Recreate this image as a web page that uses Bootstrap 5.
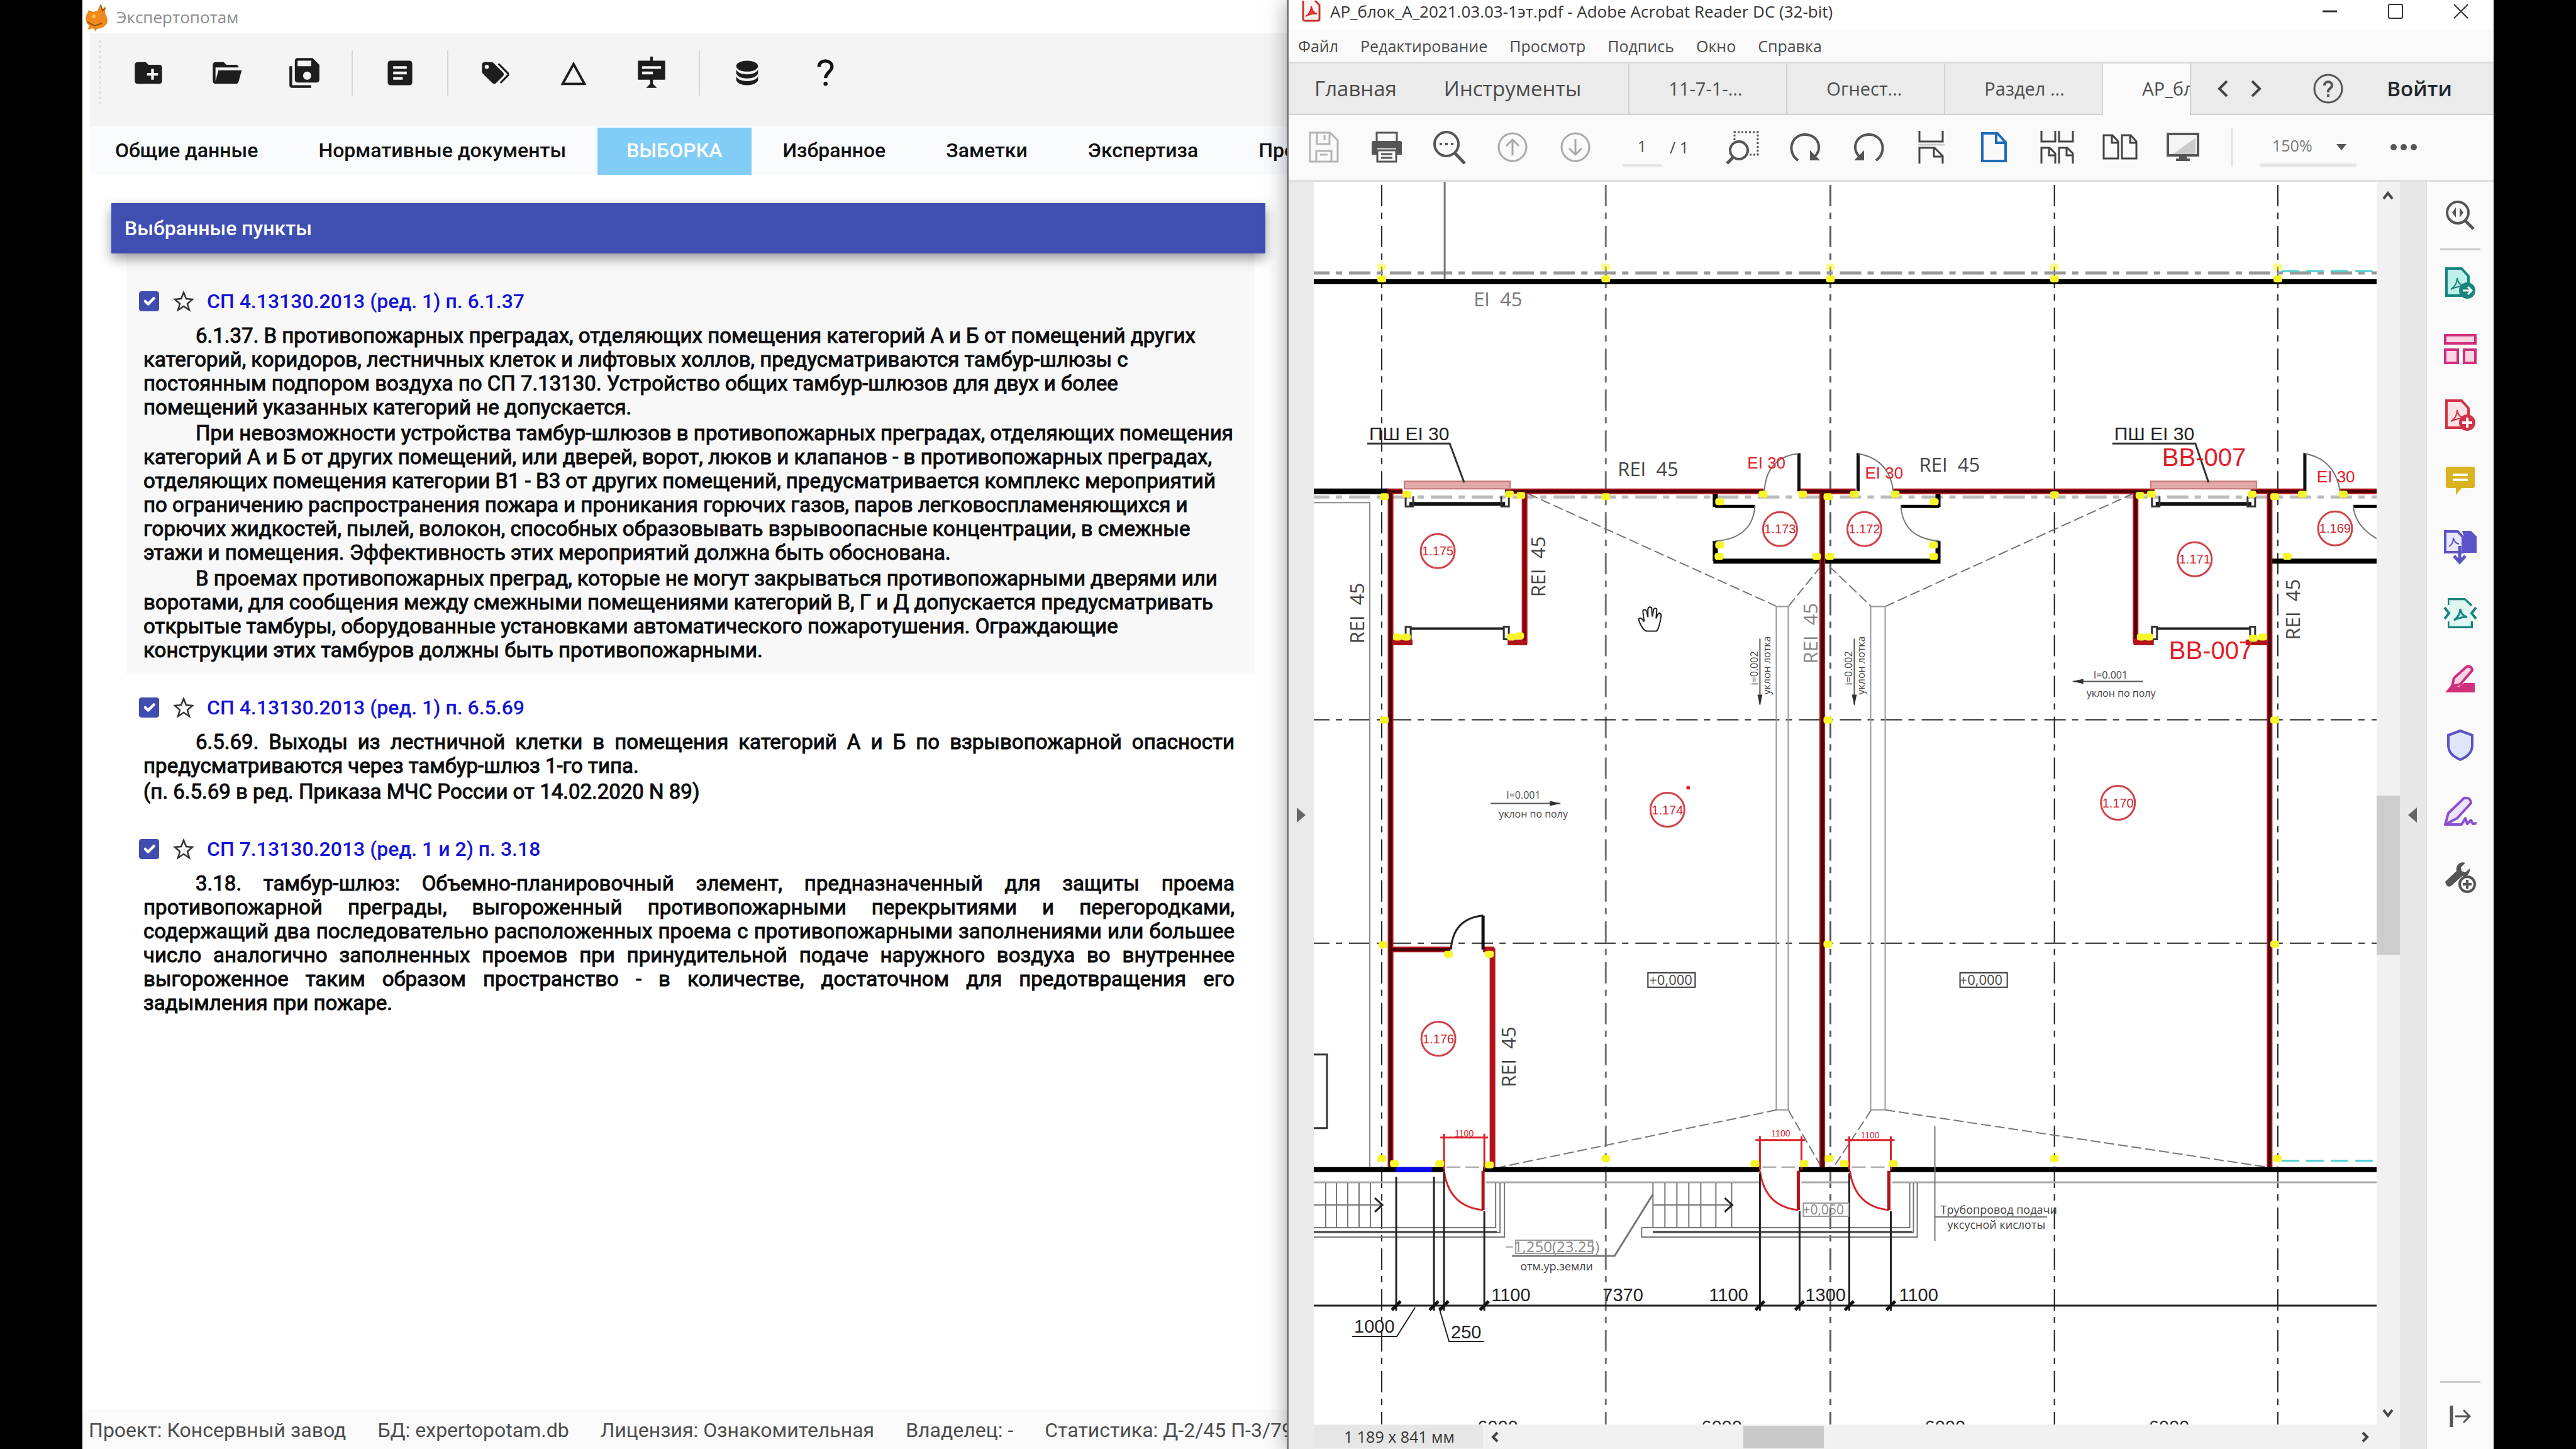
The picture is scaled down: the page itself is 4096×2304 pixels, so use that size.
<!DOCTYPE html>
<html lang="ru">
<head>
<meta charset="utf-8">
<meta name="viewport" content="width=device-width, initial-scale=1">
<title>Экспертопотам</title>
<link href="https://cdn.jsdelivr.net/npm/bootstrap@5.3.0/dist/css/bootstrap.min.css" rel="stylesheet">
<style>
html,body{height:100%}
body{background:#000;overflow:hidden;font-family:Roboto,"Liberation Sans",sans-serif;color:#111}
.desk{height:100vh;min-height:900px;padding:0 3.2vw}
.pane{width:calc(50% - 2px);min-width:0;overflow:hidden}
button{background:none;border:0;padding:0;color:inherit}
svg{display:block}
/* expert app */
.app-left{background:#fff;font-size:32px;font-weight:500}
.app-title{height:53px;padding-left:5px;gap:12px;font:26px "Open Sans",sans-serif;color:#8d8d8d}
.app-tools{height:147px;margin-left:12px;padding:27px 0 0 14px;background:#f4f4f4}
.grip{height:102px;border-left:4px dotted #dcdcdc;margin:-16px 13px 0 0}
.tool-btn{width:124px;height:72px}
.tool-sep{width:28px;height:72px}
.tool-sep::before{content:"";display:block;width:2px;height:72px;margin:0 auto;background:#d6d6d6}
.app-tabs{height:78px;margin-left:12px;padding-top:3px;gap:4px;background:#fafbfe}
.app-tabs .tab-a{height:75px;line-height:72px;padding:0 46px;color:#111;text-decoration:none;white-space:nowrap}
.app-tabs .first-tab{margin-left:-6px}
.app-tabs .tab-a.current{background:#82cdf5;color:#fff}
.list-wrap{padding:45px 34px 0 46px}
.list-head{height:80px;padding-left:21px;background:#3f4fb1;color:#fff;font-size:32px;box-shadow:0 8px 18px rgba(0,0,0,.4);position:relative}
.rule{margin:0 18px 0 24px;padding:38px 31px 18px 27px}
.rule.picked{background:#f8f8f9;padding-top:60px}
.rule-head{height:32px;margin:0 0 20px -7px}
.rule-head .form-check-input{width:32px;height:32px;margin:0;border-radius:4px;flex:none}
.rule-head .form-check-input:checked{background-color:#3f4db0;border-color:#3f4db0}
.rule-head button{margin:0 20px 0 22px}
.rule-head a{color:#1414d8;text-decoration:none;white-space:nowrap}
.rule p{margin:0;font-size:33px;font-weight:400;line-height:38px;color:#0c0c0c;-webkit-text-stroke:1px #0c0c0c}
.rule p+p{margin-top:3px}
.ln{display:block;white-space:nowrap}
.ind{padding-left:83px}
.just{white-space:normal;text-align-last:justify}
.app-status{height:64px;padding:4px 0 0 10px;gap:50px;background:#fbfbfb;color:#4c4c4c;white-space:nowrap;font-weight:400}
/* pdf reader */
.app-right{width:calc(50% + 2px);background:#fafafa;border-left:3px solid #777;box-shadow:0 0 34px rgba(0,0,0,.35);position:relative;font-family:"Open Sans","Noto Sans",sans-serif;color:#4b4b4b}
.pdf-title{height:46px;background:#fff;padding:0 0 10px 21px;font-size:26px;color:#333}
.pdf-title .caption-text{margin-left:15px}
.pdf-title button{width:104px}
.pdf-menu{height:52px;padding:4px 0 0 15px;gap:35px;font-size:25px}
.pdf-menu a,.pdf-tabs a{color:inherit;text-decoration:none;white-space:nowrap}
.pdf-tabs{height:85px;background:#ebebeb;border-top:3px solid #dcdcdc;border-bottom:2px solid #cfcfcf;line-height:80px;font-size:33px}
.pdf-tabs .home-a{margin-left:41px}
.pdf-tabs .tools-a{margin:0 75px 0 75px}
.tab-end{margin-left:25px}
.doc-tab{width:251px;flex:none;border-left:2px solid #d2d2d2;font-size:29px;padding-left:62px}
.doc-tab.open{width:142px;background:#fafafa;height:82px;overflow:hidden;border-right:2px solid #cfcfcf}
.pdf-bar{height:106px;border-bottom:3px solid #dedede;padding-left:6px;font-size:25px}
.ib{width:100px;height:90px;flex:none}
.pageno{width:62px;height:62px;margin-left:25px;border:0;border-bottom:4px solid #e4e4e4;background:none;text-align:center;color:#555}
.pageof{margin:0 28px 0 13px;width:38px;white-space:nowrap}
.bar-sep{width:2px;height:62px;background:#ddd;margin:0 43px 0 27px}
.zoomsel{width:154px;height:62px;border:0;border-bottom:5px solid #e4e4e4;appearance:none;color:#777;padding:0 0 0 20px;background:linear-gradient(#0000,#0000)}
.zoombox{margin-right:25px}
.zoombox svg{position:absolute;right:16px;top:26px;pointer-events:none}
.strip-l{width:40px;background:#eaeaea}
.sheet{background:#fff;min-width:0}
.plan{width:100%;height:100%}
.vscroll{width:37px;background:#f1f1f1;padding:14px 0}
.vgap-a{flex:952 0 0}
.vthumb{flex:255 0 0;background:#cdcdcd}
.vgap-b{flex:712 0 0}
.strip-r{width:43px;background:#e8e8e8;border-right:2px solid #dcdcdc}
.hbar{height:39px;background:#f1f1f1;font-size:25px}
.hsize{width:269px;background:#e6e6e6;padding-left:48px;line-height:37px;color:#333;white-space:nowrap}
.hthumb{width:128px;height:36px;background:#c9c9c9;margin-left:384px}
.side{width:106px}
.side button{height:105px;width:100%}
.side .find{height:106px}
.side hr{margin:0 21px;border-top:3px solid #ccc;opacity:1}
.cad{font-family:"Open Sans","Liberation Sans",sans-serif;fill:#444}
.ari{font-family:"Liberation Sans",sans-serif}
</style>
<script src="https://cdn.jsdelivr.net/npm/bootstrap@5.3.0/dist/js/bootstrap.bundle.min.js"></script>
</head>
<body>
<div class="desk d-flex">
<section class="pane app-left d-flex flex-column">
  <header class="app-title d-flex align-items-center">
    <svg width="37" height="46" viewBox="0 0 37 46"><path d="M5 12l7 3 7-2 5-11 3 9 5-5-1 11c4 6 5 13 2 18l-6 5-9 2-2 4-4-5-9 2 3-6C-1 31-1 22 3 17z" fill="#f08a1d"/><path d="M24 4l3 9 4-4M3 31l11 6 12-4" stroke="#9c4e0c" stroke-width="2" fill="none"/><circle cx="13" cy="22" r="3" fill="#ffc04d"/></svg>
    <span>Экспертопотам</span>
  </header>
  <div class="app-tools d-flex align-items-start">
    <div class="grip"></div>
    <button class="tool-btn" aria-label="Новый проект"><svg class="mx-auto" width="52" height="52" viewBox="0 0 24 24"><path fill="#1d1d1d" d="M20 6h-8l-2-2H4C2.9 4 2 4.900 2 6v12c0 1.100.9 2 2 2h16c1.100 0 2-.9 2-2V8c0-1.100-.9-2-2-2zm-1 8h-3v3h-2v-3h-3v-2h3V9h2v3h3z"/></svg></button>
    <button class="tool-btn" aria-label="Открыть"><svg class="mx-auto" width="52" height="52" viewBox="0 0 24 24"><path fill="#1d1d1d" d="M19 20H4a2 2 0 0 1-2-2V6c0-1.100.9-2 2-2h6l2 2h7a2 2 0 0 1 2 2H4v10l2.140-8h17.070l-2.280 8.500c-.23.870-1.010 1.500-1.930 1.500z"/></svg></button>
    <button class="tool-btn" aria-label="Сохранить"><svg class="mx-auto" width="52" height="56" viewBox="0 0 24 24"><path fill="#1d1d1d" d="M17 1H7a2 2 0 0 0-2 2v14a2 2 0 0 0 2 2h14a2 2 0 0 0 2-2V6l-5-5h-1zm-3 16a3 3 0 1 1 0-6 3 3 0 0 1 0 6zm3-10H7V3h10v4zM1 7h2v14h14v2H3a2 2 0 0 1-2-2V7z"/></svg></button>
    <div class="tool-sep"></div>
    <button class="tool-btn" aria-label="Отчёт"><svg class="mx-auto" width="52" height="52" viewBox="0 0 24 24"><path fill="#1d1d1d" d="M19 3H5a2 2 0 0 0-2 2v14c0 1.100.9 2 2 2h14a2 2 0 0 0 2-2V5a2 2 0 0 0-2-2zm-5 14H7v-2h7v2zm3-4H7v-2h10v2zm0-4H7V7h10v2z"/></svg></button>
    <div class="tool-sep"></div>
    <button class="tool-btn" aria-label="Метки"><svg class="mx-auto" width="52" height="52" viewBox="0 0 24 24"><path fill="#1d1d1d" d="M5.500 9A1.500 1.500 0 1 0 4 7.500 1.500 1.500 0 0 0 5.500 9m11.910 2.580c.36.360.59.860.59 1.420 0 .55-.22 1.050-.59 1.410l-5 5a1.996 1.996 0 0 1-2.830 0l-6.990-6.990C2.220 12.050 2 11.550 2 11V6c0-1.110.890-2 2-2h5c.55 0 1.050.22 1.410.58zM13.540 5.710l1-1 6.870 6.870c.37.370.59.870.59 1.420s-.22 1.050-.58 1.410L16.040 19.800l-1-1L20.750 13z"/></svg></button>
    <button class="tool-btn" aria-label="Треугольник"><svg class="mx-auto" width="52" height="52" viewBox="0 0 24 24"><path fill="none" stroke="#1d1d1d" stroke-width="1.800" d="M12 5.500L20 20H4z"/></svg></button>
    <button class="tool-btn" aria-label="Презентация"><svg class="mx-auto" width="52" height="56" viewBox="0 0 24 24"><path fill="#1d1d1d" fill-rule="evenodd" d="M11 0h2v3h9v14h-9v3l3 3H8l3-3v-3H2V3h9zM5 7v2h14V7zm0 4v2h8v-2z"/></svg></button>
    <div class="tool-sep"></div>
    <button class="tool-btn" aria-label="База данных"><svg class="mx-auto" width="52" height="52" viewBox="0 0 24 24"><path fill="#1d1d1d" d="M12 3C7.580 3 4 4.790 4 7s3.580 4 8 4 8-1.790 8-4-3.580-4-8-4M4 9v3c0 2.210 3.580 4 8 4s8-1.790 8-4V9c0 2.210-3.580 4-8 4s-8-1.790-8-4m0 5v3c0 2.210 3.580 4 8 4s8-1.790 8-4v-3c0 2.210-3.580 4-8 4s-8-1.790-8-4"/></svg></button>
    <button class="tool-btn" aria-label="Справка"><svg class="mx-auto" width="52" height="52" viewBox="0 0 24 24"><path fill="none" stroke="#111" stroke-width="2.400" d="M7.500 7.500c0-6 10-5.500 9.500.3-.3 3-4.500 4-4.700 8"/><circle cx="12.300" cy="20" r="1.500" fill="#111"/></svg></button>
  </div>
  <nav class="app-tabs d-flex">
    <a class="tab-a first-tab" href="#">Общие данные</a><a class="tab-a" href="#">Нормативные документы</a><a class="tab-a current" href="#">ВЫБОРКА</a><a class="tab-a" href="#">Избранное</a><a class="tab-a" href="#">Заметки</a><a class="tab-a" href="#">Экспертиза</a><a class="tab-a" href="#">Проверка</a>
  </nav>
  <main class="list-wrap flex-grow-1">
    <div class="list-head d-flex align-items-center">Выбранные пункты</div>
    <article class="rule picked">
      <div class="rule-head d-flex align-items-center"><input class="form-check-input" type="checkbox" checked id="r1"><button aria-label="В избранное"><svg width="34" height="34" viewBox="0 0 34 34"><path d="M17 3l4 10 10 1-8 7 3 10-9-6-9 6 3-10-8-7 10-1z" fill="none" stroke="#333" stroke-width="2.500"/></svg></button><label for="r1"><a href="#">СП 4.13130.2013 (ред. 1) п. 6.1.37</a></label></div>
      <p><span class="ln ind">6.1.37. В противопожарных преградах, отделяющих помещения категорий А и Б от помещений других</span><span class="ln">категорий, коридоров, лестничных клеток и лифтовых холлов, предусматриваются тамбур-шлюзы с</span><span class="ln">постоянным подпором воздуха по СП 7.13130. Устройство общих тамбур-шлюзов для двух и более</span><span class="ln">помещений указанных категорий не допускается.</span></p>
      <p><span class="ln ind">При невозможности устройства тамбур-шлюзов в противопожарных преградах, отделяющих помещения</span><span class="ln">категорий А и Б от других помещений, или дверей, ворот, люков и клапанов - в противопожарных преградах,</span><span class="ln">отделяющих помещения категории В1 - В3 от других помещений, предусматривается комплекс мероприятий</span><span class="ln">по ограничению распространения пожара и проникания горючих газов, паров легковоспламеняющихся и</span><span class="ln">горючих жидкостей, пылей, волокон, способных образовывать взрывоопасные концентрации, в смежные</span><span class="ln">этажи и помещения. Эффективность этих мероприятий должна быть обоснована.</span></p>
      <p><span class="ln ind">В проемах противопожарных преград, которые не могут закрываться противопожарными дверями или</span><span class="ln">воротами, для сообщения между смежными помещениями категорий В, Г и Д допускается предусматривать</span><span class="ln">открытые тамбуры, оборудованные установками автоматического пожаротушения. Ограждающие</span><span class="ln">конструкции этих тамбуров должны быть противопожарными.</span></p>
    </article>
    <article class="rule">
      <div class="rule-head d-flex align-items-center"><input class="form-check-input" type="checkbox" checked id="r2"><button aria-label="В избранное"><svg width="34" height="34" viewBox="0 0 34 34"><path d="M17 3l4 10 10 1-8 7 3 10-9-6-9 6 3-10-8-7 10-1z" fill="none" stroke="#333" stroke-width="2.500"/></svg></button><label for="r2"><a href="#">СП 4.13130.2013 (ред. 1) п. 6.5.69</a></label></div>
      <p><span class="ln just ind">6.5.69. Выходы из лестничной клетки в помещения категорий А и Б по взрывопожарной опасности</span><span class="ln">предусматриваются через тамбур-шлюз 1-го типа.</span></p>
      <p><span class="ln">(п. 6.5.69 в ред. Приказа МЧС России от 14.02.2020 N 89)</span></p>
    </article>
    <article class="rule">
      <div class="rule-head d-flex align-items-center"><input class="form-check-input" type="checkbox" checked id="r3"><button aria-label="В избранное"><svg width="34" height="34" viewBox="0 0 34 34"><path d="M17 3l4 10 10 1-8 7 3 10-9-6-9 6 3-10-8-7 10-1z" fill="none" stroke="#333" stroke-width="2.500"/></svg></button><label for="r3"><a href="#">СП 7.13130.2013 (ред. 1 и 2) п. 3.18</a></label></div>
      <p><span class="ln just ind">3.18. тамбур-шлюз: Объемно-планировочный элемент, предназначенный для защиты проема</span><span class="ln just">противопожарной преграды, выгороженный противопожарными перекрытиями и перегородками,</span><span class="ln just">содержащий два последовательно расположенных проема с противопожарными заполнениями или большее</span><span class="ln just">число аналогично заполненных проемов при принудительной подаче наружного воздуха во внутреннее</span><span class="ln just">выгороженное таким образом пространство - в количестве, достаточном для предотвращения его</span><span class="ln">задымления при пожаре.</span></p>
    </article>
  </main>
  <footer class="app-status d-flex align-items-center"><span>Проект: Консервный завод</span><span>БД: expertopotam.db</span><span>Лицензия: Ознакомительная</span><span>Владелец: -</span><span>Статистика: Д-2/45 П-3/79</span></footer>
</section>

<section class="pane app-right d-flex flex-column">
  <header class="pdf-title d-flex align-items-center">
    <svg width="30" height="34" viewBox="0 0 30 34"><path d="M2 0v29q0 3 3 3h20q3 0 3-3V7l-7-7" fill="#fff3f2" stroke="#c9302c" stroke-width="3"/><path d="M6 25c6-3 9-10 9-16 1 6 4 11 9 12-7-1-13 1-18 4z" fill="#e8473f" stroke="#d22" stroke-width="2"/></svg>
    <span class="caption-text me-auto">АР_блок_А_2021.03.03-1эт.pdf - Adobe Acrobat Reader DC (32-bit)</span>
    <button aria-label="Свернуть"><svg class="mx-auto" width="26" height="28" viewBox="0 0 26 28"><path d="M1 14h23" stroke="#333" stroke-width="3"/></svg></button>
    <button aria-label="Развернуть"><svg class="mx-auto" width="26" height="28" viewBox="0 0 26 28"><rect x="2" y="3" width="22" height="22" rx="2" fill="none" stroke="#333" stroke-width="2"/></svg></button>
    <button aria-label="Закрыть"><svg class="mx-auto" width="26" height="28" viewBox="0 0 26 28"><path d="M2 3l22 22M24 3L2 25" stroke="#333" stroke-width="2"/></svg></button>
  </header>
  <nav class="pdf-menu d-flex align-items-center"><a href="#">Файл</a><a href="#">Редактирование</a><a href="#">Просмотр</a><a href="#">Подпись</a><a href="#">Окно</a><a href="#">Справка</a></nav>
  <nav class="pdf-tabs d-flex">
    <a class="home-a" href="#">Главная</a><a class="tools-a" href="#">Инструменты</a>
    <a class="doc-tab" href="#">11-7-1-...</a><a class="doc-tab" href="#">Огнест...</a><a class="doc-tab" href="#">Раздел ...</a><a class="doc-tab open" href="#">АР_блок</a>
    <div class="tab-end d-flex align-items-center">
      <button aria-label="Назад"><svg width="52" height="30" viewBox="0 0 52 30"><path d="M32 3L20 15l12 12" fill="none" stroke="#444" stroke-width="4"/></svg></button>
      <button aria-label="Вперёд"><svg width="52" height="30" viewBox="0 0 52 30"><path d="M20 3l12 12-12 12" fill="none" stroke="#444" stroke-width="4"/></svg></button>
      <button class="mx-5 px-3" aria-label="Помощь"><svg width="50" height="50" viewBox="0 0 50 50"><circle cx="25" cy="25" r="22" fill="none" stroke="#555" stroke-width="3"/><path d="M19 20c0-8 12-8 12 0 0 4-6 5-6 9v2M25 34v4" fill="none" stroke="#555" stroke-width="4"/></svg></button>
      <a class="fw-semibold ms-1 text-dark" href="#">Войти</a>
    </div>
  </nav>
  <div class="pdf-bar d-flex align-items-center">
    <button class="ib" aria-label="Сохранить"><svg class="mx-auto" width="48" height="50" viewBox="0 0 48 50" fill="none" stroke="#b4b4b4" stroke-width="3"><path d="M2 2h32l12 12v34H2z"/><path d="M13 2v18h20V2M25 6v8M12 48V31h24v17M18 37h12"/></svg></button>
    <button class="ib" aria-label="Печать"><svg class="mx-auto" width="50" height="50" viewBox="0 0 50 50"><path d="M9 18V2h32v16" fill="none" stroke="#555" stroke-width="3"/><path d="M1 18q0-3 3-3h42q3 0 3 3v19h-9V27H10v10H1z" fill="#555"/><path d="M10 30h30v18H10zM16 36h18M16 42h18" fill="none" stroke="#555" stroke-width="3"/></svg></button>
    <button class="ib" aria-label="Уменьшить"><svg class="mx-auto" width="52" height="54" viewBox="0 0 52 54"><circle cx="21" cy="22" r="19" fill="none" stroke="#555" stroke-width="4"/><path d="M34 36l16 17" stroke="#555" stroke-width="5"/><path d="M10 22h4M19 22h4M28 22h4" stroke="#555" stroke-width="4"/></svg></button>
    <button class="ib" aria-label="Вверх"><svg class="mx-auto" width="50" height="50" viewBox="0 0 50 50" fill="none" stroke="#a9a9a9" stroke-width="3"><circle cx="25" cy="25" r="22"/><path d="M25 38V14M15 23l10-10 10 10"/></svg></button>
    <button class="ib" aria-label="Вниз"><svg class="mx-auto" width="50" height="50" viewBox="0 0 50 50" fill="none" stroke="#a9a9a9" stroke-width="3"><circle cx="25" cy="25" r="22"/><path d="M25 12v24M15 27l10 10 10-10"/></svg></button>
    <input class="pageno" value="1" aria-label="Страница"><span class="pageof">/ 1</span>
    <button class="ib" aria-label="Выделение"><svg class="mx-auto" width="54" height="54" viewBox="0 0 54 54" fill="none" stroke="#555"><path d="M14 16V3h37v36H36" stroke-width="3" stroke-dasharray="3 3"/><circle cx="21" cy="32" r="14" stroke-width="4"/><path d="M12 43L2 53" stroke-width="5"/></svg></button>
    <button class="ib" aria-label="По часовой"><svg class="mx-auto" width="52" height="50" viewBox="0 0 52 50"><path d="M14 46C-4 34 2 5 25 5s28 25 15 35" fill="none" stroke="#555" stroke-width="4"/><path d="M33 30v16h16z" fill="#555"/></svg></button>
    <button class="ib" aria-label="Против часовой"><svg class="mx-auto" width="52" height="50" viewBox="0 0 52 50"><path d="M38 46C56 34 50 5 27 5S-1 30 12 40" fill="none" stroke="#555" stroke-width="4"/><path d="M19 30v16H3z" fill="#555"/></svg></button>
    <button class="ib" aria-label="Прокрутка"><svg class="mx-auto" width="42" height="52" viewBox="0 0 42 52" fill="none" stroke="#444" stroke-width="3"><path d="M2 0v17h37V0M2 52V27h24l13 13v12M25 27v14h14"/><path d="M0 22h42" stroke="#ccc"/></svg></button>
    <button class="ib" aria-label="Одна страница"><svg class="mx-auto" width="42" height="50" viewBox="0 0 42 50" fill="none" stroke="#1f6cb8" stroke-width="4"><path d="M2 3h24l13 14v30H2zM24 3v15h15"/></svg></button>
    <button class="ib" aria-label="Две с прокруткой"><svg class="mx-auto" width="54" height="52" viewBox="0 0 54 52" fill="none" stroke="#444" stroke-width="3"><path d="M2 0v17h22V0M30 0v17h22V0M2 52V27h13l9 9v16M14 27v12h10M30 52V27h13l9 9v16M42 27v12h10"/></svg></button>
    <button class="ib" aria-label="Две страницы"><svg class="mx-auto" width="56" height="42" viewBox="0 0 56 42" fill="none" stroke="#444" stroke-width="3"><path d="M2 2h14l9 10v27H2zM15 2v12h10M31 2h14l9 10v27H31zM44 2v12h10"/></svg></button>
    <button class="ib" aria-label="Режим чтения"><svg class="mx-auto" width="52" height="46" viewBox="0 0 52 46"><rect x="2" y="2" width="48" height="34" fill="#f5f5f5" stroke="#555" stroke-width="4"/><path d="M10 34L46 8v26z" fill="#ccc"/><path d="M20 37h12v4h5v4H15v-4h5z" fill="#555"/></svg></button>
    <div class="bar-sep"></div>
    <div class="zoombox position-relative"><select class="zoomsel" aria-label="Масштаб"><option>150%</option></select><svg width="16" height="10" viewBox="0 0 16 10"><path d="M0 0h16L8 10z" fill="#555"/></svg></div>
    <button class="ib" aria-label="Ещё"><svg class="mx-auto" width="44" height="12" viewBox="0 0 44 12" fill="#555"><circle cx="6" cy="6" r="5"/><circle cx="22" cy="6" r="5"/><circle cx="38" cy="6" r="5"/></svg></button>
  </div>
  <div class="d-flex flex-grow-1 overflow-hidden">
    <button class="strip-l" aria-label="Панель слева"><svg class="mx-auto" width="16" height="24" viewBox="0 0 16 24"><path d="M1 0v24l14-12z" fill="#666"/></svg></button>
    <div class="d-flex flex-column flex-grow-1 sheet">
      <div class="flex-grow-1 overflow-hidden">
<svg class="plan" viewBox="2089 289 1689 1976" preserveAspectRatio="xMinYMin slice" fill="none">
<defs>
<g id="pin"><rect x="-7" y="-5" width="14" height="11" rx="4" fill="#f6f62a"/></g>
<g id="gate"><rect x="2" y="765" width="168" height="12" fill="#e2a9a9" stroke="#c77676" stroke-width="2"/><path d="M10 801h152" stroke="#111" stroke-width="6"/><path d="M4 789v16h12v-16M156 789v16h12v-16M12 1000v-4H4v20h8v-16M160 1000v-4h8v20h-8v-16" stroke="#333" stroke-width="3"/><path d="M12 999h148" stroke="#222" stroke-width="4"/></g>
<g id="tick"><path d="M-7 7L7-7" stroke="#111" stroke-width="5"/></g>
</defs>
<g stroke-width="2" stroke-dasharray="34 10 10 11" stroke="#222">
<path d="M2197 294V2265"/><path d="M2553 294V2265" stroke="#777" stroke-width="3"/><path d="M2910 294V2265" stroke="#555" stroke-width="3"/><path d="M3266 294V2265M3621 294V2265"/>
<path d="M2080 434H3778" stroke="#999" stroke-width="5"/><path d="M2080 1144H3778M2080 1499H3778"/><path d="M2080 790H3778" stroke="#bbb" stroke-width="5"/></g>
<path d="M2297 289V445" stroke="#777" stroke-width="3"/><path d="M2089 448H3778" stroke="#000" stroke-width="8"/>
<path d="M3627 431H3778M3627 1845H3775" stroke="#4fd0d0" stroke-width="3" stroke-dasharray="28 11"/>
<path d="M2089 799H2178V1859" stroke="#888" stroke-width="2"/><path d="M2089 1676H2110V1793H2089" stroke="#333" stroke-width="3"/>
<g stroke="#777" stroke-width="2" stroke-dasharray="16 6"><path d="M2430 785L2825 964M2895 900L2843 964M2908 900L2975 964M2997 964L3390 785M2825 1764L2385 1855M2843 1764L2893 1850M2975 1764L2915 1855M2997 1764L3605 1855"/></g>
<path d="M2824 1764V964H2843V1764zM2974 1764V964H2997V1764z" stroke="#999" stroke-width="2"/>
<path d="M2089 781H2208" stroke="#000" stroke-width="9"/>
<g stroke="#000" stroke-width="8"><path d="M2727 781V806M2727 860V892M2724 892H3085M3081 892V860M3081 806V781M3610 892H3778"/><path d="M2727 805H2790M3022 805H3083M3741 805H3778" stroke-width="5"/></g>
<g stroke="#b0141a" stroke-width="9"><path d="M2205 781H2230M2393 781H2804M2862 781H2950M3010 781H3425M3578 781H3662M3720 781H3778M2211 781V1855M2424 781V1023M2211 1021H2246M2397 1021H2428M2897 781V1855M3608 781V1855M3395 781V1023M3392 1021H3424M3570 1021H3606M2213 1509H2306M2358 1509H2376M2373 1507V1855"/></g>
<path d="M2205 781H2230M2393 781H2804M2862 781H2950M3010 781H3425M3578 781H3662M3720 781H3778M2211 781V1855M2897 781V1855M3608 781V1855M3395 781V1015M2213 1509H2306" stroke="#4a0508" stroke-width="5"/>
<path d="M2424 781V1018" stroke="#7a0a0d" stroke-width="4"/>
<use href="#gate" x="2231"/><use href="#gate" x="3417"/>
<path d="M2860 720V781M2954 720V781M3664 720V781M2358 1455V1509" stroke="#111" stroke-width="5"/>
<path d="M2860 721Q2808 726 2805 781M2954 721Q3004 730 3010 781M3664 721Q3712 730 3720 781M2790 805Q2786 856 2727 860M3022 805Q3026 856 3083 860M3741 805Q3744 836 3778 856" stroke="#777" stroke-width="2"/><path d="M2358 1455Q2310 1460 2307 1509" stroke="#222" stroke-width="3"/>
<g stroke="#333" stroke-width="3"><path d="M2174 705H2305L2328 767M3358 705H3490L3511 767"/></g>
<path d="M2089 1859H2297M2358 1859H2798M2860 1859H2941M3005 1859H3778" stroke="#000" stroke-width="8"/><path d="M2219 1859H2277" stroke="#0808e8" stroke-width="8"/>
<path d="M2300 1855H2356M2802 1855H2858M2944 1855H3002" stroke="#999" stroke-width="2" stroke-dasharray="22 8"/>
<path d="M2089 1879H2297M2362 1879H2798M2864 1879H2941M3008 1879H3778" stroke="#aaa" stroke-width="3"/>
<g stroke="#777" stroke-width="2"><path d="M2089 1951H2378V1880M2089 1959H2385V1880M2089 1966H2392V1880M2108 1880v70M2125 1880v70M2143 1880v70M2161 1880v70M2179 1880v70M2628 1880v70M2647 1880v70M2666 1880v70M2685 1880v70M2704 1880v70M2728 1880v70M2753 1880v70M2610 1951H3036V1880M2610 1951V1966H3048V1880M2628 1959H3042V1880M2089 1915H2197M2628 1915H2753"/><path d="M2186 1904l12 11-12 11M2742 1904l12 11-12 11" stroke="#222" stroke-width="3"/><path d="M2089 1958H2380M2628 1958H3040" stroke="#555" stroke-width="4"/><path d="M2404 1996H2567L2628 1898" stroke-width="3"/><path d="M3076 1790V1972M3076 1934H3254"/></g>
<g stroke="#d8232a" stroke-width="3"><path d="M2290 1808H2366M2296 1802V1859M2360 1802V1859M2791 1812H2870M2798 1806V1859M2864 1806V1859M2933 1812H3012M2940 1806V1859M3006 1806V1859"/><path d="M2296 1861Q2304 1918 2358 1923M2798 1861Q2806 1918 2859 1923M2941 1861Q2949 1918 3003 1923"/><path d="M2358 1861V1923M2859 1861V1923M3003 1861V1923" stroke-width="5" stroke="#b0141a"/></g>
<g stroke="#222" stroke-width="3"><path d="M2089 2075H3778M2220 1870V2083M2280 1870V2083M2296 1863V2083M2360 1925V2083M2798 1865V2083M2861 1925V2083M2940 1865V2083M3006 1925V2083"/><path d="M2150 2124H2221L2250 2078M2288 2078L2304 2132H2360" stroke-width="2"/></g>
<use href="#tick" x="2220" y="2075"/><use href="#tick" x="2280" y="2075"/><use href="#tick" x="2296" y="2075"/><use href="#tick" x="2360" y="2075"/><use href="#tick" x="2798" y="2075"/><use href="#tick" x="2861" y="2075"/><use href="#tick" x="2940" y="2075"/><use href="#tick" x="3006" y="2075"/>
<g opacity=".55"><use href="#pin" x="2197" y="424"/><use href="#pin" x="2553" y="424"/><use href="#pin" x="2910" y="424"/><use href="#pin" x="3266" y="424"/><use href="#pin" x="3621" y="424"/></g>
<use href="#pin" x="2197" y="443"/><use href="#pin" x="2553" y="443"/><use href="#pin" x="2910" y="443"/><use href="#pin" x="3266" y="443"/><use href="#pin" x="3621" y="443"/>
<use href="#pin" x="2201" y="789"/><use href="#pin" x="2237" y="785"/><use href="#pin" x="2400" y="785"/><use href="#pin" x="2418" y="787"/><use href="#pin" x="2553" y="789"/><use href="#pin" x="2734" y="797"/><use href="#pin" x="2803" y="785"/><use href="#pin" x="2866" y="785"/><use href="#pin" x="2906" y="789"/><use href="#pin" x="2948" y="785"/><use href="#pin" x="3013" y="785"/><use href="#pin" x="3075" y="797"/><use href="#pin" x="3266" y="786"/><use href="#pin" x="3402" y="787"/><use href="#pin" x="3420" y="785"/><use href="#pin" x="3580" y="785"/><use href="#pin" x="3616" y="789"/><use href="#pin" x="3660" y="785"/><use href="#pin" x="3725" y="785"/>
<use href="#pin" x="2734" y="866"/><use href="#pin" x="2733" y="884"/><use href="#pin" x="2888" y="884"/><use href="#pin" x="2909" y="884"/><use href="#pin" x="3074" y="866"/><use href="#pin" x="3074" y="884"/><use href="#pin" x="3636" y="884"/>
<use href="#pin" x="2222" y="1012"/><use href="#pin" x="2236" y="1012"/><use href="#pin" x="2403" y="1012"/><use href="#pin" x="2416" y="1010"/><use href="#pin" x="3404" y="1012"/><use href="#pin" x="3416" y="1012"/><use href="#pin" x="3582" y="1014"/><use href="#pin" x="3597" y="1012"/>
<use href="#pin" x="2201" y="1144"/><use href="#pin" x="2906" y="1144"/><use href="#pin" x="3616" y="1144"/><use href="#pin" x="2199" y="1501"/><use href="#pin" x="2303" y="1516"/><use href="#pin" x="2368" y="1516"/><use href="#pin" x="2906" y="1500"/><use href="#pin" x="3616" y="1500"/>
<use href="#pin" x="2197" y="1841"/><use href="#pin" x="2217" y="1849"/><use href="#pin" x="2289" y="1849"/><use href="#pin" x="2368" y="1851"/><use href="#pin" x="2553" y="1841"/><use href="#pin" x="2790" y="1849"/><use href="#pin" x="2868" y="1849"/><use href="#pin" x="2908" y="1841"/><use href="#pin" x="2932" y="1849"/><use href="#pin" x="3010" y="1849"/><use href="#pin" x="3266" y="1841"/><use href="#pin" x="3620" y="1841"/>
<g stroke="#d0434a" stroke-width="3"><circle cx="2286" cy="876" r="27"/><circle cx="2830" cy="841" r="27"/><circle cx="2964" cy="841" r="27"/><circle cx="3489" cy="889" r="27"/><circle cx="3712" cy="840" r="27"/><circle cx="2651" cy="1287" r="27"/><circle cx="3367" cy="1276" r="27"/><circle cx="2287" cy="1651" r="27"/></g>
<circle cx="2684" cy="1252" r="3" fill="#e0202a"/>
<g class="ari" fill="#d0252d" font-size="20" text-anchor="middle"><text x="2286" y="883">1.175</text><text x="2830" y="848">1.173</text><text x="2964" y="848">1.172</text><text x="3489" y="896">1.171</text><text x="3712" y="847">1.169</text><text x="2651" y="1294">1.174</text><text x="3367" y="1283">1.170</text><text x="2287" y="1658">1.176</text>
<g font-size="14"><text x="2328" y="1806">1100</text><text x="2831" y="1806">1100</text><text x="2973" y="1809">1100</text></g></g>
<g class="cad" font-size="31"><text x="2343" y="487" fill="#777">EI&#160; 45</text><text x="2572" y="757">REI&#160; 45</text><text x="3051" y="750">REI&#160; 45</text><text transform="translate(2169 1023) rotate(-90)">REI&#160; 45</text><text transform="translate(2457 949) rotate(-90)">REI&#160; 45</text><text transform="translate(2890 1055) rotate(-90)" fill="#888">REI&#160; 45</text><text transform="translate(3656 1017) rotate(-90)">REI&#160; 45</text><text transform="translate(2410 1728) rotate(-90)">REI&#160; 45</text></g>
<g class="ari" fill="#222"><g font-size="30"><text x="2177" y="700">ПШ EI 30</text><text x="3361" y="700">ПШ EI 30</text></g>
<g font-size="29"><text x="2371" y="2068">1100</text><text x="2548" y="2068">7370</text><text x="2717" y="2068">1100</text><text x="2870" y="2068">1300</text><text x="3019" y="2068">1100</text><text x="2153" y="2118">1000</text><text x="2307" y="2127">250</text><text x="2349" y="2278">6000</text><text x="2705" y="2278">6000</text><text x="3060" y="2278">6000</text><text x="3416" y="2278">6000</text></g></g>
<g class="ari" fill="#e0202a"><g font-size="26"><text x="2778" y="745">EI 30</text><text x="2965" y="761">EI 30</text><text x="3683" y="767">EI 30</text></g><g font-size="40"><text x="3437" y="741">BB-007</text><text x="3448" y="1048">BB-007</text></g></g>
<g class="cad" font-size="16"><text x="2395" y="1269">I=0.001</text><text x="2383" y="1299">уклон по полу</text><text x="3328" y="1079">I=0.001</text><text x="3317" y="1108">уклон по полу</text><text transform="translate(2795 1089) rotate(-90)">i=0.002</text><text transform="translate(2815 1104) rotate(-90)">уклон лотка</text><text transform="translate(2945 1089) rotate(-90)">i=0.002</text><text transform="translate(2965 1104) rotate(-90)">уклон лотка</text></g>
<g stroke="#555" stroke-width="2"><path d="M2370 1277H2480M3407 1083H3296M2798 1015V1120M2948 1015V1120"/></g><path d="M2482 1277l-18-4v8zM3294 1083l18-4v8zM2798 1122l-4-18h8zM2948 1122l-4-18h8z" fill="#333"/>
<g class="cad" font-size="22"><text x="2622" y="1565">+0,000</text><text x="3115" y="1565">+0,000</text></g><path d="M2620 1546h75v23h-75zM3116 1546h75v23h-75z" stroke="#333" stroke-width="2"/>
<g class="cad" style="fill:#888"><text x="2866" y="1930" font-size="21">+0,050</text><text x="2393" y="1990" font-size="24">−1,250(23.25)</text></g><path d="M2867 1912h72v21h-72zM2410 1971h122v21h-122z" stroke="#999" stroke-width="2"/>
<g class="cad" font-size="18"><text x="2417" y="2019">отм.ур.земли</text><text x="3085" y="1929">Трубопровод подачи</text><text x="3096" y="1953">уксусной кислоты</text></g>
<path d="M2613 1000c-4-5-9-15-7-17 3-2 6 2 8 5l-2-16c0-4 5-4 6 0l2 9v-13c1-4 6-4 6 0l1 12 2-11c1-3 6-3 5 1l-1 13 3-7c2-3 5-1 5 2-1 8-2 18-7 25h-17z" fill="#fff" stroke="#222" stroke-width="2"/>
</svg>
      </div>
      <div class="hbar d-flex align-items-center"><div class="hsize">1 189 x 841 мм</div><svg class="ms-2" width="22" height="18" viewBox="0 0 22 18"><path d="M15 2L8 9l7 7" fill="none" stroke="#444" stroke-width="4"/></svg><div class="hthumb"></div><svg class="ms-auto me-2" width="22" height="18" viewBox="0 0 22 18"><path d="M8 2l7 7-7 7" fill="none" stroke="#444" stroke-width="4"/></svg></div>
    </div>
    <div class="vscroll d-flex flex-column"><svg class="mx-auto" width="20" height="16" viewBox="0 0 20 16"><path d="M3 13l7-9 7 9" fill="none" stroke="#444" stroke-width="4"/></svg><div class="vgap-a"></div><div class="vthumb"></div><div class="vgap-b"></div><svg class="mx-auto mb-4" width="20" height="40" viewBox="0 0 20 40"><path d="M3 16l7 9 7-9" fill="none" stroke="#444" stroke-width="4"/></svg></div>
    <button class="strip-r" aria-label="Панель справа"><svg class="mx-auto" width="16" height="24" viewBox="0 0 16 24"><path d="M15 0v24L1 12z" fill="#666"/></svg></button>
    <aside class="side d-flex flex-column">
      <button class="find" aria-label="Поиск"><svg class="mx-auto" width="48" height="48" viewBox="0 0 48 48"><circle cx="20" cy="20" r="17" fill="none" stroke="#555" stroke-width="4"/><path d="M32 33l13 13" stroke="#555" stroke-width="5"/><path d="M17 12l-6 8 6 8zM23 12l6 8-6 8z" fill="#555"/></svg></button>
      <hr>
      <button aria-label="Экспорт PDF"><svg class="mx-auto" width="50" height="52" viewBox="0 0 50 52"><path d="M3 3h24l11 12v31H3z" fill="#bdf0ea" stroke="#17857d" stroke-width="4"/><path d="M10 36c8-5 10-11 10-18 1 7 5 12 12 13-9 0-16 2-22 5z" stroke="#17857d" stroke-width="2" fill="none"/><circle cx="36" cy="38" r="13" fill="#17857d"/><path d="M29 38h13M37 32l6 6-6 6" stroke="#fff" stroke-width="3" fill="none"/></svg></button>
      <button aria-label="Упорядочить"><svg class="mx-auto" width="52" height="50" viewBox="0 0 52 50" fill="#fbd5e5" stroke="#cf2f7b" stroke-width="4"><path d="M2 3h48v13H2zM2 26h20v21H2zM32 26h18v21H32z"/></svg></button>
      <button aria-label="Создать PDF"><svg class="mx-auto" width="50" height="52" viewBox="0 0 50 52"><path d="M3 3h24l11 12v31H3z" fill="#fde3e5" stroke="#d03345" stroke-width="4"/><path d="M10 36c8-5 10-11 10-18 1 7 5 12 12 13-9 0-16 2-22 5z" stroke="#d03345" stroke-width="2" fill="none"/><circle cx="36" cy="38" r="13" fill="#d03345"/><path d="M28 38h16M36 30v16" stroke="#fff" stroke-width="4"/></svg></button>
      <button aria-label="Комментарий"><svg class="mx-auto" width="48" height="48" viewBox="0 0 48 48"><path d="M4 1h40q3 0 3 3v28q0 3-3 3H26L17 46V35H4q-3 0-3-3V4q0-3 3-3z" fill="#d9b41f"/><path d="M12 14h24M12 22h24" stroke="#fff" stroke-width="4"/></svg></button>
      <button aria-label="Объединить файлы"><svg class="mx-auto" width="54" height="56" viewBox="0 0 54 56"><path d="M3 3h20l8 9v24H3z" fill="#e9e8ff" stroke="#5b53c6" stroke-width="4"/><path d="M9 27c5-3 7-8 7-14 1 6 4 9 9 10" stroke="#5b53c6" stroke-width="2" fill="none"/><path d="M30 2h14l9 9v26H33V12z" fill="#5b53c6"/><path d="M26 26v26M17 42l9 10 9-10" stroke="#5b53c6" stroke-width="5" fill="none"/></svg></button>
      <button aria-label="Сжать PDF"><svg class="mx-auto" width="54" height="50" viewBox="0 0 54 50"><path d="M9 12V3h25l11 10M9 38v9h36v-9" fill="none" stroke="#17857d" stroke-width="4"/><path d="M9 4h25l10 10v32H9z" fill="#d3f3ef" opacity=".7"/><path d="M2 16l7 9-7 9M52 16l-7 9 7 9" stroke="#17857d" stroke-width="4" fill="none"/><path d="M17 36c7-5 10-10 10-18 1 7 4 12 11 13-8 0-15 2-21 5z" stroke="#17857d" stroke-width="3" fill="none"/></svg></button>
      <button aria-label="Исправить"><svg class="mx-auto" width="50" height="46" viewBox="0 0 50 46"><path d="M12 34l3-13L35 3q8-2 9 6L25 31z" fill="#fbd5e5" stroke="#cf2f7b" stroke-width="4"/><path d="M1 44l10-12 12 3 8-6h17v15z" fill="#cf2f7b"/></svg></button>
      <button aria-label="Защитить"><svg class="mx-auto" width="44" height="52" viewBox="0 0 44 52"><path d="M22 3l19 7v16c0 12-8 18-19 23C11 44 3 38 3 26V10z" fill="#dfe6fb" stroke="#5b53c6" stroke-width="4"/></svg></button>
      <button aria-label="Подписать"><svg class="mx-auto" width="54" height="50" viewBox="0 0 54 50"><path d="M3 46l5-18L33 4q10-2 11 8L22 36 3 46h26l6-10 3 9 6-6 3 6 6-1" fill="#efe2fc" stroke="#8850cf" stroke-width="4" stroke-linejoin="round"/></svg></button>
      <button aria-label="Другие инструменты"><svg class="mx-auto" width="52" height="52" viewBox="0 0 52 52"><path d="M2 33l18-17c-2-9 6-16 14-13l-7 7 1 6 6 2 7-6c1 8-5 14-12 12L11 40q-7 3-9-7z" fill="#555"/><circle cx="37" cy="37" r="12" fill="#fafafa" stroke="#555" stroke-width="4"/><path d="M30 37h14M37 30v14" stroke="#555" stroke-width="4"/></svg></button>
      <hr class="mt-auto">
      <button aria-label="Свернуть панель"><svg class="mx-auto" width="34" height="36" viewBox="0 0 34 36"><path d="M3 1v34" stroke="#555" stroke-width="5"/><path d="M9 18h22M22 8l10 10-10 10" stroke="#555" stroke-width="3" fill="none"/></svg></button>
    </aside>
  </div>
</section>
</div>
</body>
</html>
